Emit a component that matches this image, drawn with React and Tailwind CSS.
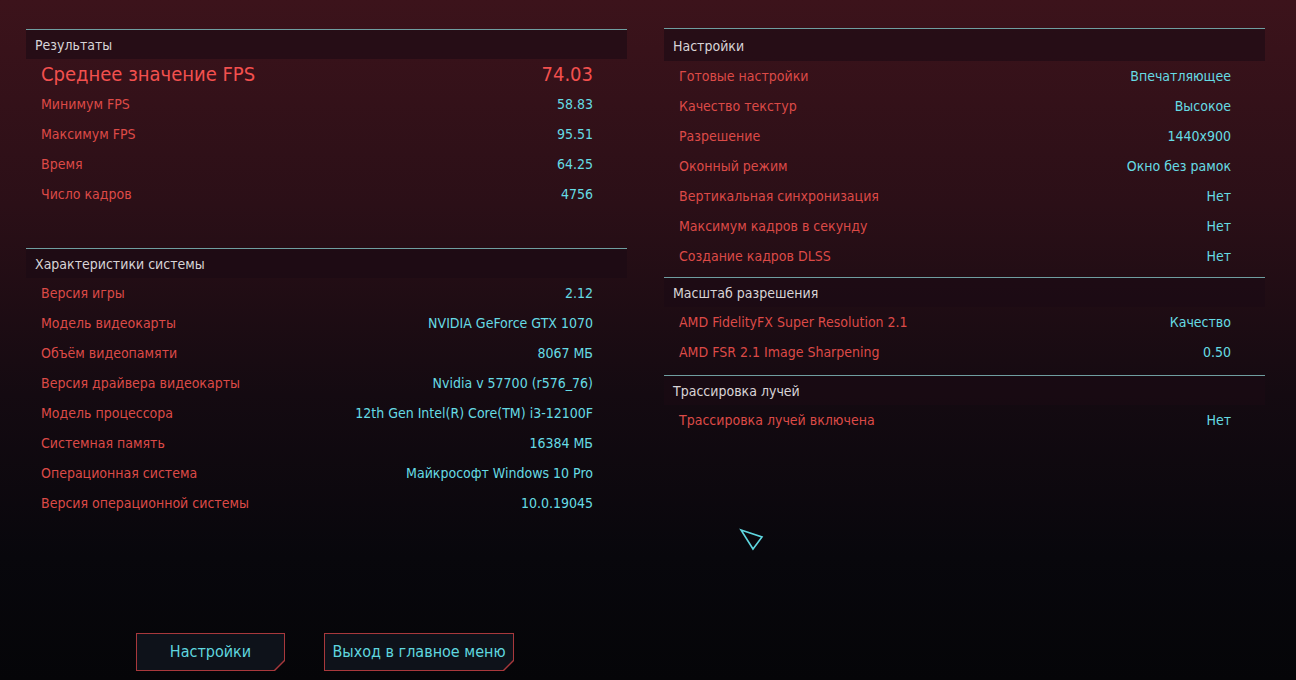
// Benchmark results screen

const FONT = { fontFamily: '"DejaVu Sans Condensed", "Liberation Sans", sans-serif' };

const results = [
  ['Минимум FPS', '58.83'],
  ['Максимум FPS', '95.51'],
  ['Время', '64.25'],
  ['Число кадров', '4756'],
];

const system = [
  ['Версия игры', '2.12'],
  ['Модель видеокарты', 'NVIDIA GeForce GTX 1070'],
  ['Объём видеопамяти', '8067 МБ'],
  ['Версия драйвера видеокарты', 'Nvidia v 57700 (r576_76)'],
  ['Модель процессора', '12th Gen Intel(R) Core(TM) i3-12100F'],
  ['Системная память', '16384 МБ'],
  ['Операционная система', 'Майкрософт Windows 10 Pro'],
  ['Версия операционной системы', '10.0.19045'],
];

const settings = [
  ['Готовые настройки', 'Впечатляющее'],
  ['Качество текстур', 'Высокое'],
  ['Разрешение', '1440x900'],
  ['Оконный режим', 'Окно без рамок'],
  ['Вертикальная синхронизация', 'Нет'],
  ['Максимум кадров в секунду', 'Нет'],
  ['Создание кадров DLSS', 'Нет'],
];

const scaling = [
  ['AMD FidelityFX Super Resolution 2.1', 'Качество'],
  ['AMD FSR 2.1 Image Sharpening', '0.50'],
];

const rays = [['Трассировка лучей включена', 'Нет']];

function SectionHeader({ title, height = 'h-[30px]' }) {
  return (
    <div className={`${height} flex items-center pt-[2px] pl-[9px] border-t border-[#6f9ea0] bg-[#1a0a14]/60 text-[14px] text-[#d8d4d6]`}>
      {title}
    </div>
  );
}

function Row({ label, value }) {
  return (
    <div className="h-[30px] flex items-center justify-between pl-[15px] pr-[34px] text-[14px]">
      <span className="text-[#dc4a47]">{label}</span>
      <span className="text-[#66dbe4]">{value}</span>
    </div>
  );
}

function Section({ title, rows, className = '', headerHeight }) {
  return (
    <div className={className}>
      <SectionHeader title={title} height={headerHeight} />
      {rows.map(([l, v]) => (
        <Row key={l} label={l} value={v} />
      ))}
    </div>
  );
}

function CutButton({ children, width }) {
  return (
    <div
      className={`${width} h-[38px] p-px bg-[#a8383c] [clip-path:polygon(0_0,100%_0,100%_calc(100%-10px),calc(100%-10px)_100%,0_100%)]`}
    >
      <div className="w-full h-full flex items-center justify-center bg-[#0e121a] text-[16px] text-[#5fd6df] [clip-path:polygon(0_0,100%_0,100%_calc(100%-10px),calc(100%-10px)_100%,0_100%)]">
        {children}
      </div>
    </div>
  );
}

export default function App() {
  return (
    <div
      style={FONT}
      className="relative w-[1296px] h-[680px] overflow-hidden bg-[linear-gradient(180deg,#3c131b_0%,#2b0f17_30%,#140a11_58%,#08070c_82%,#050508_100%)]"
    >
      <div className="flex gap-[37px] pl-[26px] pt-[29px]">
        <div className="w-[601px]">
          <div className="mb-[39px]">
            <SectionHeader title="Результаты" />
            <div className="h-[30px] flex items-center justify-between pl-[15px] pr-[34px] text-[20px] text-[#f2504e]">
              <span>Среднее значение FPS</span>
              <span>74.03</span>
            </div>
            {results.map(([l, v]) => (
              <Row key={l} label={l} value={v} />
            ))}
          </div>
          <Section title="Характеристики системы" rows={system} />
        </div>

        <div className="w-[601px] -mt-px">
          <Section title="Настройки" rows={settings} className="mb-[6px]" headerHeight="h-[33px]" />
          <Section title="Масштаб разрешения" rows={scaling} className="mb-[8px]" />
          <Section title="Трассировка лучей" rows={rays} />
        </div>
      </div>

      <div className="flex gap-[39px] pl-[136px] mt-[115px]">
        <CutButton width="w-[149px]">Настройки</CutButton>
        <CutButton width="w-[190px]">Выход в главное меню</CutButton>
      </div>

      <svg className="absolute left-[739px] top-[528px]" width="26" height="24" viewBox="0 0 26 24" fill="none">
        <path d="M2 2 L23 9 L14 21 Z" stroke="#5fd6df" strokeWidth="1.6" strokeLinejoin="miter" />
      </svg>
    </div>
  );
}
